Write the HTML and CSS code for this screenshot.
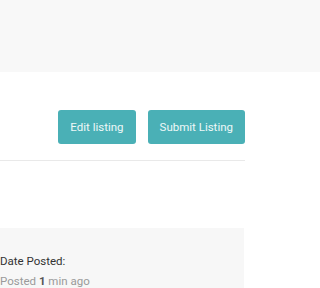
FILE: index.html
```html
<!DOCTYPE html>
<html>
<head>
<meta charset="utf-8">
<link rel="stylesheet" href="styles.css">
</head>
<body>
<header class="topbar"></header>
<main class="page">
  <div class="actions">
    <button class="btn">Edit listing</button>
    <button class="btn">Submit Listing</button>
  </div>
  <section class="meta">
    <div class="meta-label">Date Posted:</div>
    <div class="meta-value">Posted <strong>1</strong> min ago</div>
  </section>
</main>
</body>
</html>
```
FILE: styles.css
```css
html, body {
  margin: 0;
  padding: 0;
  background: #ffffff;
  font-family: Roboto, "Liberation Sans", sans-serif;
  overflow: hidden;
}
.topbar {
  height: 72px;
  background: #f8f8f8;
}
.page {
  width: 245px;
}
.actions {
  display: flex;
  justify-content: flex-end;
  gap: 12px;
  margin-top: 38px;
  padding-bottom: 16px;
  border-bottom: 1px solid #e9e9e9;
}
.btn {
  height: 34px;
  padding: 0 12px;
  border: none;
  border-radius: 3px;
  background: #4ab0b6;
  color: #eef8f8;
  font-family: Roboto, "Liberation Sans", sans-serif;
  font-size: 11.5px;
  line-height: 34px;
}
.meta {
  margin-top: 67px;
  width: 244px;
  background: #f7f7f7;
  padding: 23px 0 10px 0;
  font-size: 11.5px;
  line-height: 20px;
}
.meta-label {
  color: #333333;
}
.meta-value {
  color: #9a9a9a;
}
.meta-value strong {
  color: #555555;
  font-weight: 700;
}
```
